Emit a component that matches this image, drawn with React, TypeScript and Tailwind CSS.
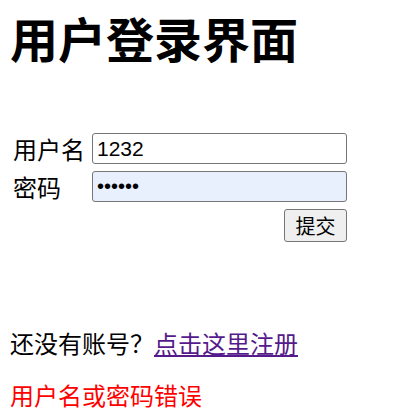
const cjk = "font-['Noto_Sans_CJK_SC','Liberation_Sans',sans-serif]"
const latin = "font-['Liberation_Sans',sans-serif]"

export default function App() {
  return (
    <div className={`${cjk} w-[401px] h-[417px] bg-white text-black`}>
      <h1 className="pl-[10px] pt-[8px] text-[48px] leading-[58px] font-bold">用户登录界面</h1>

      <form className="mt-[67px] pl-[12px] w-[347px]" onSubmit={(e) => e.preventDefault()}>
        <div className="flex items-center gap-[6px]">
          <label className="w-[74px] text-[24px] leading-[31px] pl-[1px]">用户名</label>
          <input
            className={`${latin} w-[255px] h-[31px] border border-[#767676] rounded-[3px] px-[4px] text-[21px] bg-white outline-none`}
            defaultValue="1232"
          />
        </div>
        <div className="flex items-center gap-[6px] mt-[7px]">
          <label className="w-[74px] text-[24px] leading-[31px] pl-[1px]">密码</label>
          <input
            type="password"
            className={`${latin} w-[255px] h-[31px] border border-[#767676] rounded-[3px] px-[4px] text-[20px] bg-[#e8f0fe] outline-none`}
            defaultValue="123456"
          />
        </div>
        <div className="flex justify-end mt-[7px]">
          <button
            type="submit"
            className="w-[63px] h-[33px] border border-[#767676] rounded-[3px] bg-[#efefef] text-[20px]"
          >
            提交
          </button>
        </div>
      </form>

      <p className="pl-[10px] mt-[86px] text-[24px] leading-[30px]">
        还没有账号？<a href="#" className="text-[#551a8b] underline">点击这里注册</a>
      </p>
      <p className="pl-[10px] mt-[22px] text-[24px] leading-[30px] text-[#ff0000]">用户名或密码错误</p>
    </div>
  )
}
